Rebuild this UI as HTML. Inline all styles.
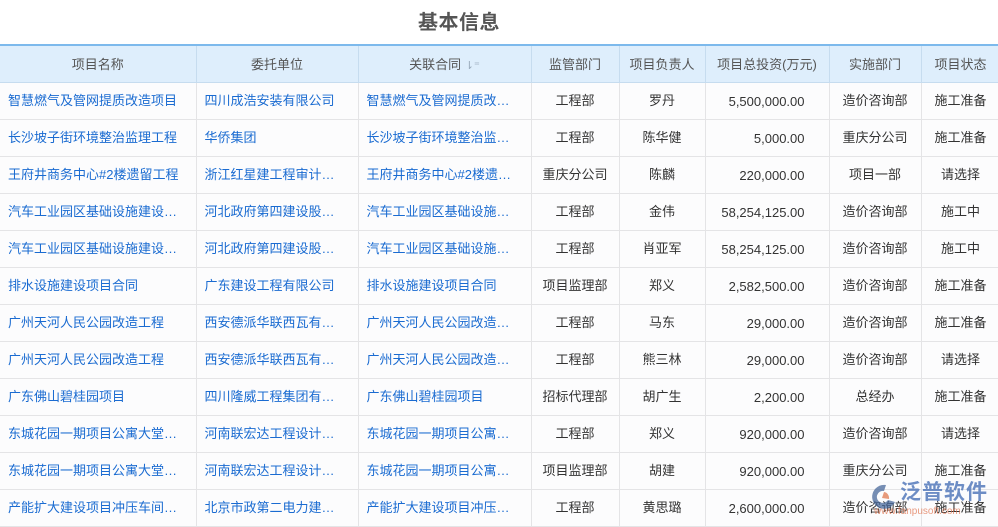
<!DOCTYPE html>
<html><head><meta charset="utf-8"><style>
*{margin:0;padding:0;box-sizing:border-box}
body{width:998px;height:525px;overflow:hidden;background:#fff;font-family:"Liberation Sans","Noto Sans CJK SC",sans-serif;font-size:13px;position:relative}
h1{position:absolute;left:0;top:6px;width:918px;text-align:center;font-size:20px;font-weight:bold;color:#555;letter-spacing:0.5px}
table{position:absolute;top:44px;left:0;border-collapse:collapse;table-layout:fixed;width:1000px}
th{height:37px;background:#deeefc;color:#555;font-weight:normal;border-top:2px solid #7cb9ec;border-bottom:1px solid #c6dcef;border-right:1px solid #c6dcef;text-align:center;white-space:nowrap;padding:0}
td{height:37px;border-bottom:1px solid #e4e4e6;border-right:1px solid #e4e4e6;background:#fcfcfd;color:#333;text-align:center;white-space:nowrap;overflow:hidden;text-overflow:ellipsis;padding:0 6px;line-height:16px}
td.l{color:#1a6bd1;text-align:left;padding-left:8px;padding-right:16px}
td.r{text-align:right;padding-right:24px;padding-top:2px}
.logo{position:absolute;left:866px;top:478px;width:132px;height:44px;white-space:nowrap}
</style></head><body>
<h1>基本信息</h1>
<table>
<colgroup><col style="width:196px"><col style="width:162px"><col style="width:173px"><col style="width:88px"><col style="width:86px"><col style="width:124px"><col style="width:92px"><col style="width:79px"></colgroup>
<tr><th>项目名称</th><th>委托单位</th><th>关联合同 <span style="color:#9ab;font-size:11px">⇂⁼</span></th><th>监管部门</th><th>项目负责人</th><th>项目总投资(万元)</th><th>实施部门</th><th>项目状态</th></tr>
<tr><td class="l">智慧燃气及管网提质改造项目</td><td class="l">四川成浩安装有限公司</td><td class="l">智慧燃气及管网提质改造项目</td><td>工程部</td><td>罗丹</td><td class="r">5,500,000.00</td><td>造价咨询部</td><td>施工准备</td></tr>
<tr><td class="l">长沙坡子街环境整治监理工程</td><td class="l">华侨集团</td><td class="l">长沙坡子街环境整治监理工程</td><td>工程部</td><td>陈华健</td><td class="r">5,000.00</td><td>重庆分公司</td><td>施工准备</td></tr>
<tr><td class="l">王府井商务中心#2楼遗留工程</td><td class="l">浙江红星建工程审计事务所</td><td class="l">王府井商务中心#2楼遗留工程</td><td>重庆分公司</td><td>陈麟</td><td class="r">220,000.00</td><td>项目一部</td><td>请选择</td></tr>
<tr><td class="l">汽车工业园区基础设施建设项目</td><td class="l">河北政府第四建设股份公司</td><td class="l">汽车工业园区基础设施建设项目</td><td>工程部</td><td>金伟</td><td class="r">58,254,125.00</td><td>造价咨询部</td><td>施工中</td></tr>
<tr><td class="l">汽车工业园区基础设施建设项目</td><td class="l">河北政府第四建设股份公司</td><td class="l">汽车工业园区基础设施建设项目</td><td>工程部</td><td>肖亚军</td><td class="r">58,254,125.00</td><td>造价咨询部</td><td>施工中</td></tr>
<tr><td class="l">排水设施建设项目合同</td><td class="l">广东建设工程有限公司</td><td class="l">排水设施建设项目合同</td><td>项目监理部</td><td>郑义</td><td class="r">2,582,500.00</td><td>造价咨询部</td><td>施工准备</td></tr>
<tr><td class="l">广州天河人民公园改造工程</td><td class="l">西安德派华联西瓦有限公司</td><td class="l">广州天河人民公园改造工程</td><td>工程部</td><td>马东</td><td class="r">29,000.00</td><td>造价咨询部</td><td>施工准备</td></tr>
<tr><td class="l">广州天河人民公园改造工程</td><td class="l">西安德派华联西瓦有限公司</td><td class="l">广州天河人民公园改造工程</td><td>工程部</td><td>熊三林</td><td class="r">29,000.00</td><td>造价咨询部</td><td>请选择</td></tr>
<tr><td class="l">广东佛山碧桂园项目</td><td class="l">四川隆威工程集团有限公司</td><td class="l">广东佛山碧桂园项目</td><td>招标代理部</td><td>胡广生</td><td class="r">2,200.00</td><td>总经办</td><td>施工准备</td></tr>
<tr><td class="l">东城花园一期项目公寓大堂装修</td><td class="l">河南联宏达工程设计有限公司</td><td class="l">东城花园一期项目公寓大堂装修</td><td>工程部</td><td>郑义</td><td class="r">920,000.00</td><td>造价咨询部</td><td>请选择</td></tr>
<tr><td class="l">东城花园一期项目公寓大堂装修</td><td class="l">河南联宏达工程设计有限公司</td><td class="l">东城花园一期项目公寓大堂装修</td><td>项目监理部</td><td>胡建</td><td class="r">920,000.00</td><td>重庆分公司</td><td>施工准备</td></tr>
<tr><td class="l">产能扩大建设项目冲压车间改造</td><td class="l">北京市政第二电力建设公司</td><td class="l">产能扩大建设项目冲压车间改造</td><td>工程部</td><td>黄思璐</td><td class="r">2,600,000.00</td><td>造价咨询部</td><td>施工准备</td></tr>
</table>
<div class="logo">
<svg width="30" height="30" viewBox="0 0 30 30" style="position:absolute;left:2px;top:4px;opacity:.75"><path d="M18 3 A12 12 0 1 0 27 20 L20 18 A6 6 0 1 1 16 9 Z" fill="#4a6a9c"/><path d="M16 10 A6 6 0 0 1 21 17 L14 16 Z" fill="#e07a50"/></svg>
<div style="position:absolute;left:34px;top:3px;font-size:21px;line-height:24px;font-weight:bold;color:#4a72b8;opacity:.8;letter-spacing:1px">泛普软件</div>
<div style="position:absolute;left:8px;top:28px;font-size:10px;color:#e0704a;opacity:.7">www.fanpusoft.com</div>
</div>
</body></html>
